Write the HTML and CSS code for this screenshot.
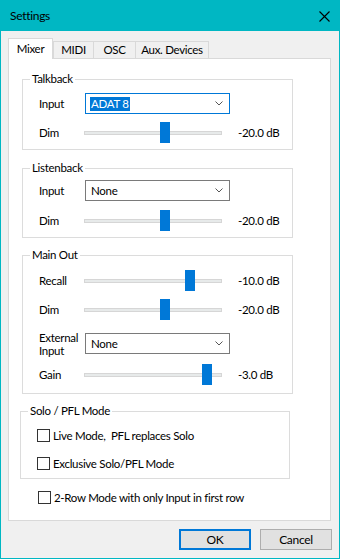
FILE: index.html
```html
<!DOCTYPE html>
<html lang="en">
<head>
  <meta charset="UTF-8">
  <meta name="viewport" content="width=device-width, initial-scale=1">
  <title>Settings</title>
  <link rel="stylesheet" href="styles.css">
</head>
<body>

  <div class="window">
    <div class="titlebar">
      <span class="title">Settings</span>
      <svg class="close" width="11" height="11" viewBox="0 0 11 11">
        <path d="M0.5 0.5 L10.5 10.5 M10.5 0.5 L0.5 10.5" stroke="#000" stroke-width="1.1" fill="none"/>
      </svg>
    </div>

    <div class="content">
      <div class="tabs">
        <div class="tab active tab-mixer">Mixer</div>
        <div class="tab tab-midi">MIDI</div>
        <div class="tab tab-osc">OSC</div>
        <div class="tab tab-aux">Aux. Devices</div>
      </div>

      <div class="panel">

        <div class="group group-talkback">
          <span class="group-label">Talkback</span>
          <div class="row row-combo">
            <span class="lbl">Input</span>
            <div class="combo focused">
              <span class="combo-text selected">ADAT 8</span>
              <svg class="chevron" width="8" height="5" viewBox="0 0 8 5"><path d="M0.5 0.5 L4 4 L7.5 0.5" stroke="#555" fill="none"/></svg>
            </div>
          </div>
          <div class="row row-slider gap-8">
            <span class="lbl">Dim</span>
            <div class="slider"><div class="track"></div><div class="thumb" style="left:76px"></div></div>
            <span class="val">-20.0 dB</span>
          </div>
        </div>

        <div class="group group-listenback">
          <span class="group-label">Listenback</span>
          <div class="row row-combo">
            <span class="lbl">Input</span>
            <div class="combo">
              <span class="combo-text">None</span>
              <svg class="chevron" width="8" height="5" viewBox="0 0 8 5"><path d="M0.5 0.5 L4 4 L7.5 0.5" stroke="#555" fill="none"/></svg>
            </div>
          </div>
          <div class="row row-slider gap-9">
            <span class="lbl">Dim</span>
            <div class="slider"><div class="track"></div><div class="thumb" style="left:76px"></div></div>
            <span class="val">-20.0 dB</span>
          </div>
        </div>

        <div class="group group-mainout">
          <span class="group-label">Main Out</span>
          <div class="row row-slider">
            <span class="lbl">Recall</span>
            <div class="slider"><div class="track"></div><div class="thumb" style="left:101px"></div></div>
            <span class="val">-10.0 dB</span>
          </div>
          <div class="row row-slider gap-7">
            <span class="lbl">Dim</span>
            <div class="slider"><div class="track"></div><div class="thumb" style="left:76px"></div></div>
            <span class="val">-20.0 dB</span>
          </div>
          <div class="row row-combo gap-12">
            <span class="lbl lbl-two">External<br>Input</span>
            <div class="combo">
              <span class="combo-text">None</span>
              <svg class="chevron" width="8" height="5" viewBox="0 0 8 5"><path d="M0.5 0.5 L4 4 L7.5 0.5" stroke="#555" fill="none"/></svg>
            </div>
          </div>
          <div class="row row-slider gap-10">
            <span class="lbl">Gain</span>
            <div class="slider"><div class="track"></div><div class="thumb" style="left:118px"></div></div>
            <span class="val">-3.0 dB</span>
          </div>
        </div>

        <div class="group group-solo">
          <span class="group-label">Solo / PFL Mode</span>
          <label class="check">
            <span class="box"></span>
            <span>Live Mode,&nbsp; PFL replaces Solo</span>
          </label>
          <label class="check gap-15">
            <span class="box"></span>
            <span>Exclusive Solo/PFL Mode</span>
          </label>
        </div>

        <label class="check check-tworow">
          <span class="box"></span>
          <span>2-Row Mode with only Input in first row</span>
        </label>

      </div>

      <div class="buttons">
        <button class="btn btn-default">OK</button>
        <button class="btn">Cancel</button>
      </div>
    </div>
  </div>

</body>
</html>
```

FILE: styles.css
```css
* {
  box-sizing: border-box;
}

body {
  margin: 0;
  font-family: 'Lato', sans-serif;
  font-size: 11.5px;
  letter-spacing: -0.3px;
  color: #000;
  background: #f0f0f0;
}

.window {
  width: 340px;
  height: 559px;
  border: 1px solid #00b7c3;
  background: #f0f0f0;
}

.titlebar {
  height: 30px;
  background: #00b7c3;
  display: flex;
  align-items: center;
  justify-content: space-between;
  padding: 0 9px 0 9px;
}

.title {
  font-size: 12px;
  line-height: 16px;
}

.close {
  display: block;
}

.content {
  padding: 7px 7px 0 7px;
}

/* tabs */

.tabs {
  display: flex;
  align-items: flex-end;
  height: 20px;
}

.tab {
  height: 17px;
  line-height: 15px;
  text-align: center;
  border: 1px solid #d9d9d9;
  border-bottom: none;
  background: #f0f0f0;
  margin-left: -1px;
}

.tab.active {
  height: 21px;
  line-height: 19px;
  margin-bottom: -1px;
  margin-left: 0;
  background: #fff;
  position: relative;
  z-index: 1;
}

.tab-mixer { width: 45px; }
.tab-midi { width: 41px; margin-left: 0; }
.tab-osc { width: 43px; }
.tab-aux { width: 74px; }

.panel {
  width: 323px;
  height: 463px;
  background: #fff;
  border: 1px solid #d9d9d9;
  padding: 20px 0 0 13px;
}

/* group boxes */

.group {
  position: relative;
  width: 271px;
  border: 1px solid #dcdcdc;
  padding-left: 16px;
}

.group-label {
  position: absolute;
  top: -8px;
  left: 7px;
  padding: 0 2px;
  line-height: 14px;
  background: #fff;
}

.group-talkback {
  height: 71px;
  padding-top: 13px;
}

.group-listenback {
  height: 70px;
  margin-top: 18px;
  padding-top: 11px;
}

.group-mainout {
  height: 139px;
  margin-top: 17px;
  padding-top: 14px;
}

.group-solo {
  width: 270px;
  height: 68px;
  margin-top: 17px;
  margin-left: -2px;
  padding-top: 17px;
}

.row {
  display: flex;
  align-items: center;
}

.row-combo {
  height: 21px;
}

.row-slider {
  height: 22px;
}

.gap-7 { margin-top: 7px; }
.gap-8 { margin-top: 8px; }
.gap-9 { margin-top: 9px; }
.gap-10 { margin-top: 10px; }
.gap-12 { margin-top: 12px; }
.gap-15 { margin-top: 15px; }

.lbl {
  width: 45px;
  flex-shrink: 0;
  line-height: 14px;
}

.lbl-two {
  line-height: 13px;
}

/* combo box */

.combo {
  width: 145px;
  height: 21px;
  margin-left: 1px;
  border: 1px solid #7a7a7a;
  background: #fff;
  display: flex;
  align-items: center;
  justify-content: space-between;
  padding: 0 6px 0 4px;
}

.combo.focused {
  border-color: #0078d7;
}

.combo-text {
  line-height: 14px;
  padding: 0 1px;
}

.combo-text.selected {
  background: #0078d7;
  color: #fff;
}

.chevron {
  display: block;
}

/* trackbar */

.slider {
  position: relative;
  width: 138px;
  height: 22px;
}

.track {
  position: absolute;
  left: 0;
  right: 0;
  top: 9px;
  height: 4px;
  background: #e7eaea;
  border: 1px solid #d6d6d6;
}

.thumb {
  position: absolute;
  top: 0;
  width: 10px;
  height: 21px;
  background: #0078d7;
}

.val {
  margin-left: 16px;
  line-height: 14px;
}

/* checkboxes */

.check {
  display: flex;
  align-items: center;
  height: 13px;
}

.box {
  width: 13px;
  height: 13px;
  border: 1px solid #333;
  background: #fff;
  margin-right: 3px;
  flex-shrink: 0;
}

.check-tworow {
  margin-top: 12px;
  margin-left: 16px;
}

/* buttons */

.buttons {
  display: flex;
  justify-content: flex-end;
  gap: 9px;
  margin-top: 8px;
}

.btn {
  width: 72px;
  height: 21px;
  padding: 0;
  font-family: 'Lato', sans-serif;
  font-size: 12px;
  letter-spacing: -0.3px;
  color: #000;
  background: #e1e1e1;
  border: 1px solid #adadad;
}

.btn-default {
  border: 2px solid #0078d7;
}
```
